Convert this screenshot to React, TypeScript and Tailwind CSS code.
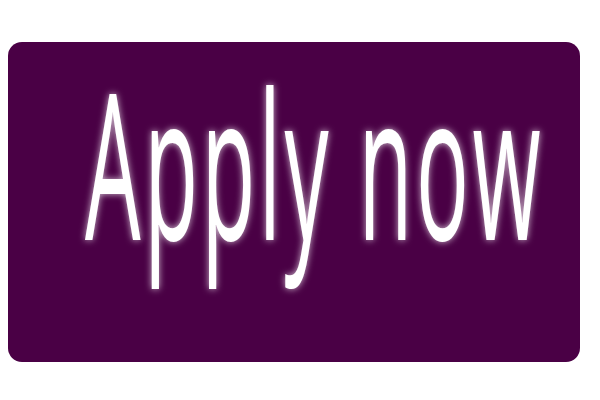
export default function App() {
  return (
    <div className="w-[600px] h-[400px] bg-white pt-[42px] pl-[8px]">
      <button className="w-[572px] h-[320px] rounded-[14px] bg-[#4a0045] flex items-start justify-start pl-[77px] pt-[18px] cursor-pointer">
        <span
          className="inline-block origin-top-left scale-y-[2.31] text-[88px] leading-none font-medium tracking-[3.5px] text-white whitespace-nowrap [text-shadow:0_0_5px_rgba(255,255,255,0.75)]"
          style={{ fontFamily: '"Open Sans", "DejaVu Sans", sans-serif' }}
        >
          Apply now
        </span>
      </button>
    </div>
  );
}
